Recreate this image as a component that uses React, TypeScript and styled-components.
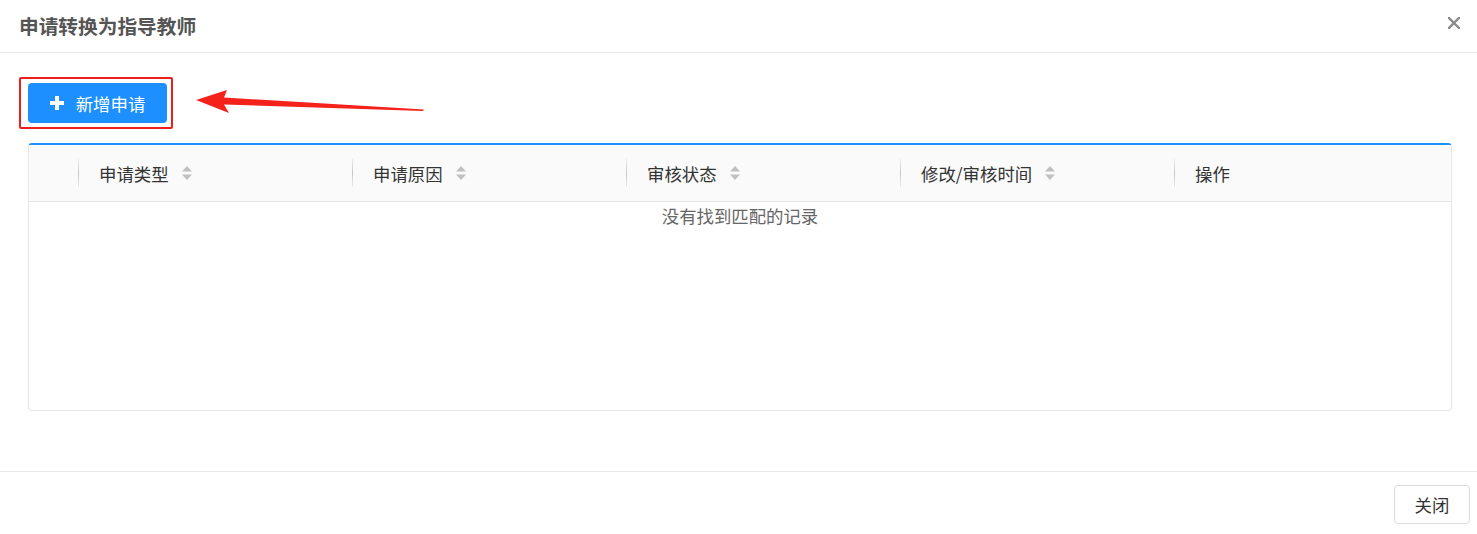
import styled, { createGlobalStyle } from 'styled-components';

const GlobalStyle = createGlobalStyle`
  html, body {
    margin: 0;
    padding: 0;
    background: #fff;
  }
  body {
    font-family: "Microsoft YaHei", "Noto Sans CJK SC", "Liberation Sans", sans-serif;
    color: #333;
  }
`;

const columns = [
  { title: '申请类型', sortable: true },
  { title: '申请原因', sortable: true },
  { title: '审核状态', sortable: true },
  { title: '修改/审核时间', sortable: true },
  { title: '操作', sortable: false },
];

const SortIcon = () => (
  <svg width="10" height="14" viewBox="0 0 10 14">
    <path d="M5 0 L10 5.5 L0 5.5 Z" fill="#c0c0c0" />
    <path d="M5 14 L10 8.5 L0 8.5 Z" fill="#c0c0c0" />
  </svg>
);

const PlusIcon = () => (
  <svg width="14" height="14" viewBox="0 0 14 14">
    <path d="M5 0 H9 V5 H14 V9 H9 V14 H5 V9 H0 V5 H5 Z" fill="#fff" />
  </svg>
);

const CloseIcon = () => (
  <svg width="12" height="12" viewBox="0 0 12 12">
    <path d="M1 1 L11 11 M11 1 L1 11" stroke="#8a8a8a" strokeWidth="2.4" strokeLinecap="square" />
  </svg>
);

const App = () => {
  return (
    <>
      <GlobalStyle />
      <Modal>
        <Header>
          <Title>申请转换为指导教师</Title>
          <CloseButton>
            <CloseIcon />
          </CloseButton>
        </Header>
        <Body>
          <Toolbar>
            <Highlight>
              <PrimaryButton>
                <PlusIcon />
                <span>新增申请</span>
              </PrimaryButton>
            </Highlight>
            <Arrow width="240" height="30" viewBox="0 0 240 30">
              <path d="M0 13 L31 3 L28 10.5 L228 22.5 L227 24 L28 17.5 L33 26 Z" fill="#f5221b" />
            </Arrow>
          </Toolbar>
          <Table>
            <HeadRow>
              <CheckCell />
              {columns.map((col, i) => (
                <HeadCell key={col.title} $last={i === columns.length - 1}>
                  <Divider />
                  <HeadText>{col.title}</HeadText>
                  {col.sortable && <SortIcon />}
                </HeadCell>
              ))}
            </HeadRow>
            <Empty>没有找到匹配的记录</Empty>
          </Table>
        </Body>
        <Footer>
          <DefaultButton>关闭</DefaultButton>
        </Footer>
      </Modal>
    </>
  );
};

const Modal = styled.div`
  width: 1477px;
  height: 534px;
  display: flex;
  flex-direction: column;
  background: #fff;
`;

const Header = styled.div`
  height: 53px;
  box-sizing: border-box;
  padding: 0 17px 0 19px;
  display: flex;
  align-items: center;
  justify-content: space-between;
  border-bottom: 1px solid #e9e9e9;
`;

const Title = styled.div`
  font-size: 19.7px;
  font-weight: bold;
  color: #555;
  padding-bottom: 1px;
`;

const CloseButton = styled.div`
  display: flex;
  align-items: center;
  cursor: pointer;
  padding-bottom: 7px;
`;

const Body = styled.div`
  flex: 1;
  padding: 24px 25px 0 19px;
`;

const Toolbar = styled.div`
  display: flex;
  align-items: center;
  position: relative;
`;

const Highlight = styled.div`
  border: 2px solid #f01d1d;
  border-radius: 2px;
  padding: 4px 4px 4px 7px;
`;

const PrimaryButton = styled.button`
  width: 139px;
  height: 40px;
  border: none;
  border-radius: 4px;
  background: #1e8fff;
  color: #fff;
  font-family: inherit;
  font-size: 17.4px;
  display: flex;
  align-items: center;
  justify-content: center;
  gap: 12px;
  padding: 0;
  cursor: pointer;
`;

const Arrow = styled.svg`
  position: absolute;
  left: 177px;
  top: 10px;
`;

const Table = styled.div`
  margin: 14px 0 0 9px;
  height: 268px;
  box-sizing: border-box;
  border: 1px solid #e6e6e6;
  border-top: 2px solid #1e8fff;
  border-radius: 4px;
`;

const HeadRow = styled.div`
  display: flex;
  height: 56px;
  background: #fafafa;
  border-bottom: 1px solid #e6e6e6;
`;

const CheckCell = styled.div`
  width: 49px;
`;

const HeadCell = styled.div<{ $last?: boolean }>`
  position: relative;
  width: ${({ $last }) => ($last ? 'auto' : '274px')};
  flex: ${({ $last }) => ($last ? '1' : 'none')};
  display: flex;
  align-items: center;
  padding-left: 21px;
  gap: 13px;
  box-sizing: border-box;
`;

const Divider = styled.span`
  position: absolute;
  left: 0;
  top: 14px;
  bottom: 14px;
  width: 1px;
  background: linear-gradient(to bottom, rgba(200, 200, 200, 0.3), #c8c8c8 50%, rgba(200, 200, 200, 0.3));
`;

const HeadText = styled.span`
  font-size: 17.4px;
  color: #333;
`;

const Empty = styled.div`
  text-align: center;
  font-size: 17.4px;
  line-height: 28px;
  color: #666;
`;

const Footer = styled.div`
  height: 63px;
  box-sizing: border-box;
  border-top: 1px solid #e9e9e9;
  display: flex;
  justify-content: flex-end;
  align-items: flex-start;
  padding: 13px 7px 0 0;
`;

const DefaultButton = styled.button`
  width: 76px;
  height: 39px;
  border: 1px solid #dcdcdc;
  border-radius: 4px;
  background: #fff;
  color: #333;
  font-family: inherit;
  font-size: 17.4px;
  cursor: pointer;
`;

export default App;
